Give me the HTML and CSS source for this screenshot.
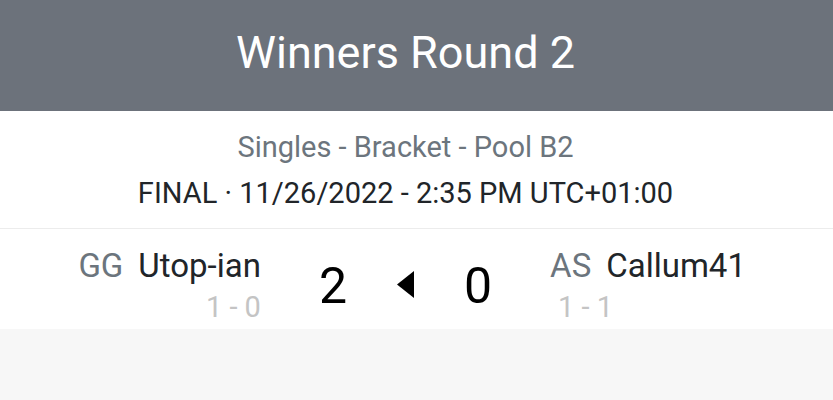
FILE: index.html
```html
<!DOCTYPE html>
<html>
<head>
<meta charset="utf-8">
<link rel="stylesheet" href="styles.css">
</head>
<body>
<div class="header"><h1 class="title">Winners Round 2</h1></div>
<div class="info">
  <div class="event">Singles - Bracket - Pool B2</div>
  <div class="status">FINAL · 11/26/2022 - 2:35 PM UTC+01:00</div>
</div>
<div class="match">
  <div class="player left">
    <div class="name"><span class="tag">GG</span><span class="gamer">Utop-ian</span></div>
    <div class="record">1 - 0</div>
  </div>
  <div class="scores">
    <span class="score">2</span>
    <svg class="winner" width="17" height="27" viewBox="0 0 17 27"><polygon points="17,0 17,27 0,13.5" fill="#000"/></svg>
    <span class="score">0</span>
  </div>
  <div class="player right">
    <div class="name"><span class="tag">AS</span><span class="gamer">Callum41</span></div>
    <div class="record rec-right">1 - 1</div>
  </div>
</div>
</body>
</html>
```
FILE: styles.css
```css
html, body {
  margin: 0;
  padding: 0;
}
body {
  background: #f7f7f7;
  font-family: Roboto, "Liberation Sans", sans-serif;
  height: 400px;
  overflow: hidden;
}
.header {
  background: #6c727b;
  height: 111px;
  box-sizing: border-box;
  display: flex;
  align-items: center;
  justify-content: center;
  padding: 0 22px 6px 0;
}
.title {
  margin: 0;
  color: #fff;
  font-weight: 400;
  font-size: 45px;
  line-height: normal;
}
.info {
  background: #fff;
  padding: 13px 22px 12px 0;
  text-align: center;
  border-bottom: 1px solid #ececec;
}
.event {
  color: #6c757d;
  font-size: 29px;
  line-height: 46px;
}
.status {
  color: #212529;
  font-size: 29px;
  line-height: 46px;
}
.match {
  background: #fff;
  display: grid;
  grid-template-columns: 1fr auto 1fr;
  column-gap: 58px;
  padding: 0 22px 0 0;
  height: 100px;
}
.player {
  display: flex;
  flex-direction: column;
  padding-top: 17px;
}
.player.left {
  align-items: flex-end;
}
.player.right {
  align-items: flex-start;
}
.name {
  display: flex;
  gap: 15px;
  font-size: 33px;
  line-height: 40px;
}
.tag {
  color: #6c757d;
}
.gamer {
  color: #212529;
}
.record {
  color: #c4c4c4;
  font-size: 29px;
  line-height: 43px;
}
.rec-right {
  margin-left: 8px;
}
.scores {
  display: flex;
  align-items: center;
  align-self: start;
  gap: 50px;
  padding-top: 27px;
}
.score {
  font-size: 50px;
  color: #000;
  line-height: 60px;
}
.winner {
  display: block;
  margin-bottom: 3px;
}
```
